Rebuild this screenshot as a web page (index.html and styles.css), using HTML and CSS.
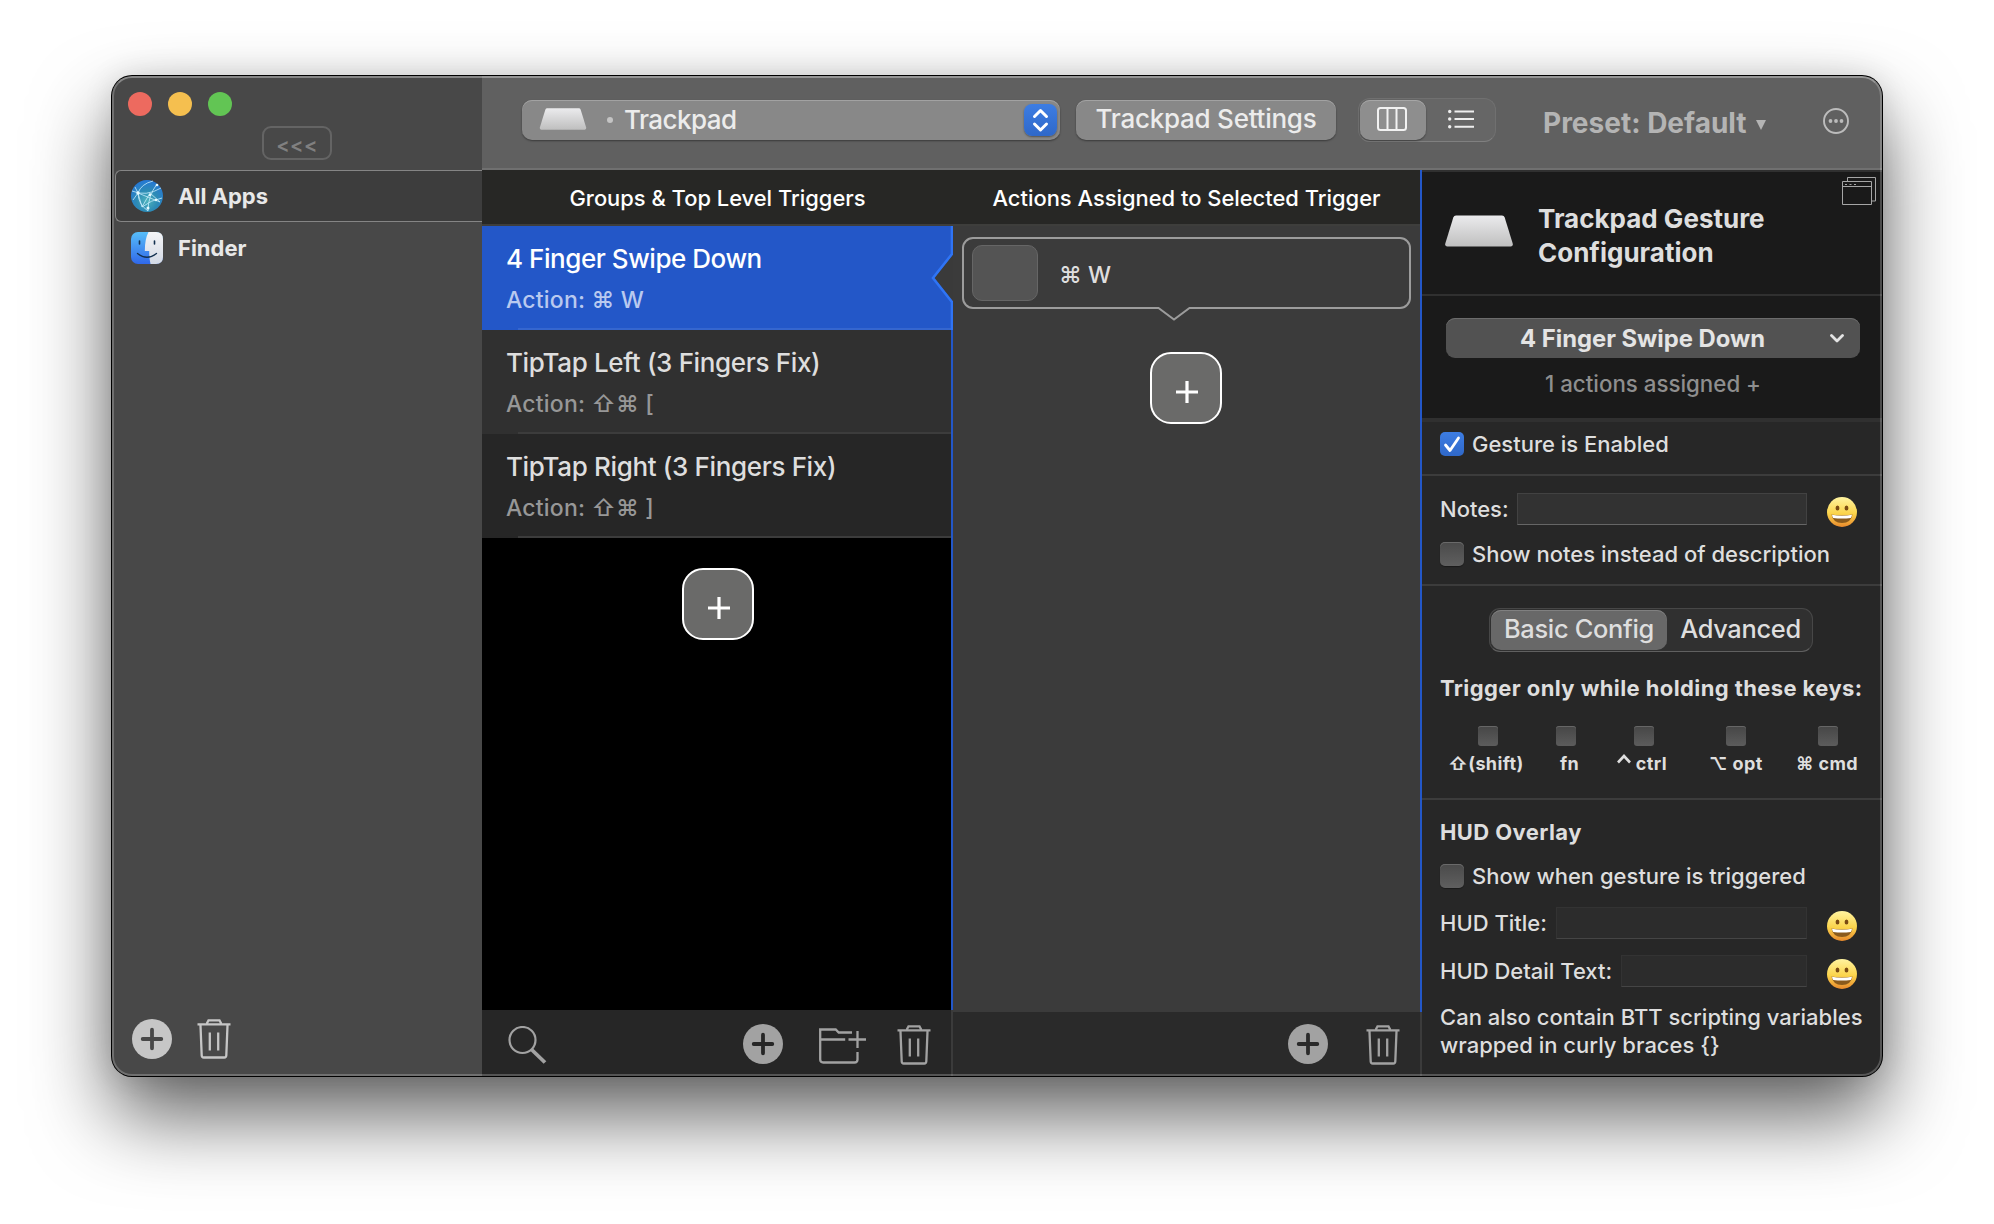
FILE: index.html
```html
<!DOCTYPE html>
<html lang="en">
<head>
<meta charset="utf-8">
<title>Trackpad triggers</title>
<link rel="stylesheet" href="styles.css">
</head>
<body>
<svg class="defs" width="0" height="0" aria-hidden="true">
  <defs>
    <linearGradient id="pad" x1="0" y1="0" x2="0" y2="1"><stop offset="0" stop-color="#ebebed"/><stop offset="1" stop-color="#bfbfbf"/></linearGradient>
    <linearGradient id="face" x1="0" y1="0" x2="0" y2="1"><stop offset="0" stop-color="#fff3a0"/><stop offset=".55" stop-color="#fbd44b"/><stop offset="1" stop-color="#e8892c"/></linearGradient>
    <radialGradient id="globe" cx=".5" cy=".65" r=".65"><stop offset="0" stop-color="#4fb4bd"/><stop offset=".5" stop-color="#2d8bb5"/><stop offset="1" stop-color="#2577d6"/></radialGradient>
    <linearGradient id="finderL" x1="0" y1="0" x2="0" y2="1"><stop offset="0" stop-color="#57bdf8"/><stop offset="1" stop-color="#3068ea"/></linearGradient>
    <linearGradient id="finderR" x1="0" y1="0" x2="0" y2="1"><stop offset="0" stop-color="#f4f4f6"/><stop offset="1" stop-color="#d3dae6"/></linearGradient>
    <symbol id="i-pad" viewBox="0 0 68 32"><path d="M11 .5h46q2 0 2.700 2l8 26q.6 3-2 3H2.300q-2.600 0-2-3l8-26q.7-2 2.700-2z" fill="url(#pad)"/></symbol>
    <symbol id="i-emoji" viewBox="0 0 32 32"><circle cx="16" cy="16" r="15" fill="url(#face)"/><ellipse cx="11.500" cy="12" rx="1.900" ry="2.500" fill="#7a4a12"/><ellipse cx="20.500" cy="12" rx="1.900" ry="2.500" fill="#7a4a12"/><path d="M5.500 18.500q10.500 2 21 0q-1.500 8.500-10.500 8.500t-10.500-8.500z" fill="#8a5a1c"/><path d="M6 18.800q10 2 20 0q-.2 2-1.200 3.200q-8.800 1.200-17.600 0q-1-1.200-1.200-3.200z" fill="#fff"/></symbol>
    <symbol id="i-plus" viewBox="0 0 40 40"><circle cx="20" cy="20" r="20" fill="currentColor"/><path d="M20 10.700v18.600M10.700 20h18.600" stroke="var(--hole)" stroke-width="3.800" stroke-linecap="round"/></symbol>
    <symbol id="i-trash" viewBox="0 0 34 40"><path d="M.5 5.300h33M9.800 4.500L11.500 1.400h11l1.700 3.100M3.500 6.500l1.200 30q.1 2 2 2h20.600q1.900 0 2-2l1.200-30M12.800 13.500v18M21.200 13.500v18" fill="none" stroke="currentColor" stroke-width="2.300"/></symbol>
  </defs>
</svg>
<main class="window">
  <aside class="sidebar">
    <div class="titlebar">
      <div class="lights"><i class="red"></i><i class="yellow"></i><i class="green"></i></div>
      <button class="collapse">&lt;&lt;&lt;</button>
    </div>
    <div class="app selected">
      <svg width="32" height="32" viewBox="0 0 32 32"><circle cx="16" cy="16" r="16" fill="url(#globe)"/><g fill="none" stroke="#cdf1ff" stroke-width=".9" opacity=".85"><path d="M1 11q14 6 29-3M7 13q3-9 15-12M7 13q0 11 10 18M26 4q-9 12-9 27M19 13l-8 14M19 13l10 9M11 27q9-7 20-9M7 13q12 5 22 9M2 20l5-7L4 7M11 27L7 13"/></g><g fill="#e5faff"><circle cx="7" cy="13" r="1.700"/><circle cx="26" cy="5" r="1.300"/><circle cx="19" cy="15" r="1.200"/><circle cx="25" cy="20" r="1.300"/><circle cx="17" cy="28" r="1.500"/></g></svg>
      <span>All Apps</span>
    </div>
    <div class="app">
      <svg width="32" height="32" viewBox="0 0 32 32"><rect width="32" height="32" rx="7" fill="url(#finderL)"/><path d="M17.500 0H25q7 0 7 7v18q0 7-7 7h-5.500q-1.300-5-1.300-13h-4.400q0-12 3.700-19z" fill="url(#finderR)"/><path d="M8.500 9v3M23.500 9v3" stroke="#12304f" stroke-width="1.600" stroke-linecap="round"/><path d="M6.500 21.500q9.500 7.500 19 0" fill="none" stroke="#12304f" stroke-width="1.300" stroke-linecap="round"/></svg>
      <span>Finder</span>
    </div>
    <footer class="side-tools">
      <svg class="plus" width="40" height="40"><use href="#i-plus"/></svg>
      <svg class="trash" width="34" height="40"><use href="#i-trash"/></svg>
    </footer>
  </aside>
  <section class="main">
    <header class="toolbar">
      <div class="picker"><svg width="48" height="22"><use href="#i-pad"/></svg><i class="dot"></i><span class="picked">Trackpad</span>
        <span class="stepper"><svg width="33" height="32" viewBox="0 0 33 32" fill="none" stroke="#fff" stroke-width="3" stroke-linecap="round" stroke-linejoin="round"><path d="M10.500 12.500l6-6 6 6M10.500 20l6 6 6-6"/></svg></span></div>
      <button class="settings">Trackpad Settings</button>
      <div class="views">
        <span class="view on"><svg width="30" height="24" viewBox="0 0 30 24" fill="none" stroke="#f2f2f2" stroke-width="2"><rect x="1" y="1" width="28" height="22" rx="2.500"/><path d="M10.500 1v22M19.500 1v22"/></svg></span>
        <span class="view list"><svg width="26" height="20" viewBox="0 0 26 20"><path d="M6.500 2.500H26M6.500 10H26M6.500 17.700H26" stroke="#eee" stroke-width="2.100"/><g fill="#eee"><circle cx="1.700" cy="2.500" r="1.700"/><circle cx="1.700" cy="10" r="1.700"/><circle cx="1.700" cy="17.700" r="1.700"/></g></svg></span>
      </div>
      <div class="preset"><span>Preset: Default</span><i class="caret"></i></div>
      <svg class="more" width="26" height="26" viewBox="0 0 26 26"><circle cx="13" cy="13" r="12" fill="none" stroke="currentColor" stroke-width="1.900"/><g fill="currentColor"><circle cx="7.500" cy="13" r="1.900"/><circle cx="13" cy="13" r="1.900"/><circle cx="18.500" cy="13" r="1.900"/></g></svg>
    </header>
    <div class="columns">
      <section class="col groups">
        <h2>Groups &amp; Top Level Triggers</h2>
        <div class="row active"><b>4 Finger Swipe Down</b><small>Action: ⌘ W</small>
          <svg class="notch" width="22" height="104" viewBox="0 0 22 104"><path d="M22 28L3 52l19 24z" fill="#3a3a3a"/><path d="M21 0v28L2 52l19 24v28" fill="none" stroke="#2f74f5" stroke-width="2.600"/></svg></div>
        <div class="row odd"><b>TipTap Left (3 Fingers Fix)</b><small>Action: ⇧⌘ [</small></div>
        <div class="row"><b>TipTap Right (3 Fingers Fix)</b><small>Action: ⇧⌘ ]</small></div>
        <div class="canvas"><button class="add"><svg width="22" height="22" viewBox="0 0 22 22"><path d="M11 0v22M0 11h22" stroke="#fff" stroke-width="3.200"/></svg></button></div>
        <footer class="tools">
          <svg class="search" width="39" height="38" viewBox="0 0 39 38" fill="none" stroke="currentColor"><circle cx="14.500" cy="14" r="13" stroke-width="2.200"/><path d="M23.500 23.500L37 36.500" stroke-width="3.800"/></svg>
          <svg class="plus" width="40" height="40"><use href="#i-plus"/></svg>
          <svg class="folder" width="47" height="36" viewBox="0 0 47 36" fill="none" stroke="currentColor" stroke-width="2.300"><path d="M38.500 24v7.500q0 3-3 3H4.200q-3 0-3-3V1.500h15.500l3 3H33M1.200 11.500h25M29.500 11.500h17.500M38.500 3v17"/></svg>
          <svg class="trash" width="34" height="40"><use href="#i-trash"/></svg>
        </footer>
      </section>
      <section class="col actions">
        <h2>Actions Assigned to Selected Trigger</h2>
        <div class="board">
          <div class="card"><i class="thumb"></i><span class="shortcut">⌘ W</span>
            <svg class="tip" width="34" height="15" viewBox="0 0 34 15"><path d="M1 0h32v3L17 14 1 3z" fill="#3b3b3b"/><path d="M0 2h1.500L17 13.500 32.500 2H34" fill="none" stroke="#9c9c9c" stroke-width="2"/></svg></div>
          <button class="add"><svg width="22" height="22" viewBox="0 0 22 22"><path d="M11 0v22M0 11h22" stroke="#fff" stroke-width="3.200"/></svg></button>
        </div>
        <footer class="tools">
          <svg class="plus" width="40" height="40"><use href="#i-plus"/></svg>
          <svg class="trash" width="34" height="40"><use href="#i-trash"/></svg>
        </footer>
      </section>
      <section class="inspector">
        <div class="intro">
          <svg width="68" height="32"><use href="#i-pad"/></svg>
          <h1>Trackpad Gesture<br>Configuration</h1>
          <svg class="windows" width="34" height="28" viewBox="0 0 34 28" fill="none" stroke="#a6a6a6" stroke-width="1"><path d="M.5 4.500h29v23H.5zM.5 9.500h29M5.500 4V.5h28v23.500H30"/><path d="M3 7.500h12" stroke-dasharray="2 2.500"/></svg>
        </div>
        <div class="chooser">
          <div class="popup"><span>4 Finger Swipe Down</span><svg width="14" height="9" viewBox="0 0 14 9"><path d="M1.500 1.500L7 7l5.500-5.500" fill="none" stroke="#e4e4e4" stroke-width="2.800" stroke-linecap="round" stroke-linejoin="round"/></svg></div>
          <p>1 actions assigned +</p>
        </div>
        <div class="enabled"><i class="check on"><svg width="24" height="24" viewBox="0 0 24 24"><path d="M5.500 13l4.500 5.500L18.500 6" fill="none" stroke="#fff" stroke-width="2.800" stroke-linecap="round" stroke-linejoin="round"/></svg></i><span>Gesture is Enabled</span></div>
        <div class="notes">
          <div class="field f1"><label>Notes:</label><i class="input strong"></i><svg width="32" height="32"><use href="#i-emoji"/></svg></div>
          <div class="line"><i class="check"></i><span>Show notes instead of description</span></div>
        </div>
        <div class="config">
          <div class="tabs"><span class="tab on">Basic Config</span><span class="tab">Advanced</span></div>
          <h3>Trigger only while holding these keys:</h3>
          <div class="keys">
            <div class="key k1"><i class="mini"></i><span>⇧(shift)</span></div>
            <div class="key k2"><i class="mini"></i><span>fn</span></div>
            <div class="key k3"><i class="mini"></i><span><svg class="ctl" width="14" height="17" viewBox="0 0 14 17"><path d="M1 9.500L7 3l6 6.500" fill="none" stroke="#dedede" stroke-width="2.600"/></svg> ctrl</span></div>
            <div class="key k4"><i class="mini"></i><span>⌥ opt</span></div>
            <div class="key k5"><i class="mini"></i><span>⌘ cmd</span></div>
          </div>
        </div>
        <div class="hud">
          <h3>HUD Overlay</h3>
          <div class="line"><i class="check"></i><span>Show when gesture is triggered</span></div>
          <div class="field f2"><label>HUD Title:</label><i class="input"></i><svg width="32" height="32"><use href="#i-emoji"/></svg></div>
          <div class="field f3"><label>HUD Detail Text:</label><i class="input"></i><svg width="32" height="32"><use href="#i-emoji"/></svg></div>
          <p>Can also contain BTT scripting variables<br>wrapped in curly braces {}</p>
        </div>
      </section>
    </div>
  </section>
</main>
</body>
</html>
```

FILE: styles.css
```css
* { box-sizing: border-box; }
html { background: #fff; }
body { margin: 0; height: 1224px; padding: 76px 112px 0; font-family: Inter, "Liberation Sans", "DejaVu Sans", sans-serif; font-size: 22px; font-weight: 450; color: #dedede; }
.defs { display: block; height: 0; }
svg { display: block; flex: none; }
button { font: inherit; color: inherit; padding: 0; border: 0; }
h1, h2, h3, p { margin: 0; white-space: nowrap; }
i { display: block; flex: none; font-style: normal; }
span, label, b, small { white-space: nowrap; }

.window { position: relative; display: flex; width: 1770px; height: 1000px; border-radius: 20px; overflow: hidden; background: #262626; box-shadow: 0 0 0 1px #000, 0 0 30px rgba(0,0,0,.12), 0 40px 80px rgba(0,0,0,.62); }
.window::after { content: ""; position: absolute; inset: 0; border: 2px solid rgba(255,255,255,.22); border-top-color: rgba(255,255,255,.34); border-radius: 20px; }

.sidebar { width: 370px; background: #484848; display: flex; flex-direction: column; }
.titlebar { height: 94px; padding: 16px 0 0 16px; }
.lights { display: flex; gap: 16px; }
.lights i { width: 24px; height: 24px; border-radius: 50%; }
.red { background: #ed6a5f; } .yellow { background: #f5bf4f; } .green { background: #62c554; }
.collapse { display: block; margin: 10px 0 0 134px; width: 70px; height: 34px; border: 2px solid #646464; border-radius: 9px; background: none; color: #808080; font-size: 20px; font-weight: 600; line-height: 34px; letter-spacing: .4px; }
.app { height: 52px; padding-left: 19px; display: flex; align-items: center; gap: 15px; font-weight: 700; color: #e8e8e8; }
.app.selected { margin-left: 3px; padding-left: 15px; background: #3d3d3d; border: 1px solid #858585; border-right: 0; border-radius: 6px 0 0 6px; }
.side-tools { margin-top: auto; height: 80px; padding: 23px 0 0 20px; display: flex; gap: 25px; align-items: flex-start; color: #c6c6c6; --hole: #484848; }

.main { flex: 1; display: flex; flex-direction: column; }
.toolbar { height: 94px; background: #606060; border-bottom: 2px solid #707070; padding: 0 33px 0 40px; display: flex; align-items: flex-start; }
.picker { width: 538px; height: 40px; margin-top: 24px; border-radius: 10px; background: #888; box-shadow: inset 0 1px #a2a2a2, 0 1px 2px rgba(0,0,0,.4); display: flex; align-items: center; padding: 0 3px 0 17px; font-size: 26px; color: #ececec; }
.picker > svg { margin-top: -2px; }
.picked { letter-spacing: -.55px; padding-bottom: 2px; }
.dot { width: 6px; height: 6px; border-radius: 50%; background: #c4c4c4; margin: 0 11px 0 20px; }
.stepper { margin-left: auto; width: 33px; height: 32px; border-radius: 8px; background: linear-gradient(#3d7de3, #2f68c9); box-shadow: 0 1px 2px rgba(0,0,0,.4); }
.settings { width: 260px; height: 40px; margin: 24px 0 0 16px; border-radius: 10px; background: #888; box-shadow: inset 0 1px #a2a2a2, 0 1px 2px rgba(0,0,0,.4); font-size: 26px; line-height: 36px; padding-bottom: 2px; letter-spacing: -.25px; color: #ececec; }
.views { width: 138px; height: 44px; margin: 22px 0 0 22px; border: 1px solid #707070; border-bottom-color: #808080; border-radius: 12px; background: #666; padding: 1px; display: flex; }
.view { flex: 1; display: grid; place-items: center; height: 40px; padding-bottom: 2px; }
.view.on { flex: 0 0 66px; padding-right: 2px; border-radius: 10px; background: #8e8e8e; box-shadow: inset 0 1px #a6a6a6, 0 1px 2px rgba(0,0,0,.4); }
.view.list { padding-left: 2px; }
.preset { margin: 29px 0 0 47px; display: flex; align-items: center; gap: 9px; font-size: 28px; line-height: 36px; font-weight: 700; color: #b4b4b4; }
.caret { border: 5px solid transparent; border-top: 10px solid #b4b4b4; border-bottom: 0; margin-top: 4px; }
.more { margin: 32px 0 0 auto; color: #bcbcbc; }

.columns { flex: 1; display: flex; min-height: 0; }
.col { display: flex; flex-direction: column; border-right: 2px solid #2357c8; }
.groups { width: 471px; background: #000; }
.actions { width: 469px; background: #3b3b3b; }
.col h2 { height: 56px; background: #272725; border-bottom: 2px solid #3e3e3c; text-align: center; font-size: 21.900px; font-weight: 500; line-height: 56px; color: #fff; }
.groups h2 { margin-right: -2px; position: relative; }
.row { position: relative; height: 104px; padding: 17px 0 0 24px; background: #262626; }
.row::after { content: ""; position: absolute; left: 36px; right: 0; bottom: 0; height: 2px; background: #3c3c3c; }
.row.odd { background: #303030; }
.row.active { background: #2357c8; margin-right: -2px; }
.row.active::after { background: #3566cf; }
.row b { display: block; font-weight: 450; font-size: 26px; letter-spacing: -.35px; line-height: 32px; color: #dedede; }
.row.active b { color: #fff; letter-spacing: -.45px; }
.row small { display: block; margin-top: 9px; font-size: 23px; letter-spacing: .2px; line-height: 32px; color: #979797; }
.row.active small { color: #b9c9ef; }
.notch { position: absolute; right: 0; top: 0; z-index: 1; }
.canvas { flex: 1; padding-top: 30px; padding-left: 200px; }
.add { display: block; width: 72px; height: 72px; border: 2px solid #fff; border-radius: 21px; background: #6a6a69; padding: 8px 0 0 24px; }
.tools { height: 66px; margin-right: -2px; border-right: 2px solid #3b3b3b; background: #262626; display: flex; align-items: flex-start; color: #a2a2a2; --hole: #262626; position: relative; }
.groups .tools { padding-left: 26px; }
.groups .search { margin-top: 16px; } .groups .plus { margin: 14px 0 0 196px; } .groups .folder { margin: 18px 0 0 36px; } .groups .trash { margin: 15px 0 0 31px; }
.actions .tools { height: 64px; padding: 12px 0 0 335px; gap: 38px; background: #2a2a2a; --hole: #2a2a2a; }
.actions .trash { margin-top: 1px; }
.board { flex: 1; padding: 11px 9px; }
.card { position: relative; height: 72px; border: 2px solid #9c9c9c; border-radius: 11px; display: flex; align-items: center; padding-left: 8px; gap: 21px; font-weight: 500; font-size: 23px; }
.shortcut { padding-top: 3px; }
.thumb { width: 66px; height: 56px; border: 1px solid #666; border-radius: 10px; background: #545454; }
.tip { position: absolute; left: 193px; top: 67px; }
.board .add { margin: 43px 0 0 188px; }

.inspector { flex: 1; background: #272727; border-top: 2px solid #303030; font-size: 22px; }
.intro { position: relative; height: 124px; background: #1a1a1a; border-bottom: 2px solid #303030; display: flex; align-items: center; padding: 0 0 0 23px; gap: 25px; }
.intro > svg:first-child { margin-top: -4px; }
.intro h1 { font-size: 26px; line-height: 34px; font-weight: 700; padding-top: 5px; }
.windows { position: absolute; right: 6px; top: 5px; }
.chooser { height: 126px; background: #1a1a1a; border-bottom: 4px solid #303030; padding: 22px 22px 0 24px; }
.popup { height: 40px; border-radius: 9px; background: #525252; box-shadow: inset 0 1px #6c6c6c; display: flex; align-items: center; justify-content: space-between; padding: 0 16px 0 74px; font-size: 23.800px; font-weight: 700; color: #e4e4e4; }
.chooser p { text-align: center; line-height: 52px; color: #8e8e8e; font-size: 22.300px; }
.check { width: 24px; height: 24px; border-radius: 5px; background: linear-gradient(#4a4a4a, #5f5f5f); box-shadow: inset 0 1px #6a6a6a, 0 1px 1px rgba(0,0,0,.35); }
.check.on { background: linear-gradient(#3d7de3, #2f68c9); box-shadow: none; }
.enabled { height: 54px; padding: 10px 0 0 18px; border-bottom: 2px solid #3c3c3c; display: flex; gap: 8px; line-height: 24px; }
.notes { height: 110px; padding: 17px 0 0 18px; border-bottom: 2px solid #3c3c3c; }
.line { display: flex; gap: 8px; line-height: 24px; }
.field { display: flex; height: 32px; line-height: 32px; }
.field svg { margin: 3px 0 0 19px; }
.field label { flex: none; }
.input { height: 32px; background: #2c2c2c; border: 1px solid #333; border-bottom: 1px solid #454545; }
.input.strong { background: #323232; border-color: #424242; border-bottom-color: #666; }
.f1 label { width: 77px; } .f1 .input { width: 290px; }
.f2 label { width: 116px; } .f2 .input { width: 251px; }
.f3 label { width: 181px; } .f3 .input { width: 186px; }
.notes .line { margin-top: 17px; }
.config { height: 214px; border-bottom: 2px solid #3c3c3c; padding-top: 22px; }
.tabs { margin-left: 67px; width: 324px; height: 44px; border: 1px solid #474747; border-bottom-color: #606060; border-radius: 11px; background: #303030; padding: 1px; display: flex; font-size: 25.400px; letter-spacing: -.3px; line-height: 38px; text-align: center; }
.tab { flex: 1; padding-left: 3px; }
.tab.on { flex: 0 0 176px; height: 40px; padding: 0; border-radius: 10px; background: #686868; box-shadow: inset 0 1px #808080; }
h3 { font-size: 22px; font-weight: 700; line-height: 28px; letter-spacing: .4px; }
.config h3 { padding: 22px 0 0 18px; }
.keys { display: flex; margin: 24px 0 0 26px; font-size: 18px; font-weight: 700; letter-spacing: .4px; line-height: 24px; }
.mini { width: 20px; height: 20px; border-radius: 3px; background: linear-gradient(#464646, #5c5c5c); box-shadow: inset 0 1px #666; margin-bottom: 6px; }
.k1 { width: 112px; } .k2 { width: 57px; } .k3 { width: 92px; } .k4 { width: 87px; }
.k1 .mini { margin-left: 30px; } .k2 .mini { margin-left: -4px; } .k3 .mini { margin-left: 17px; } .k4 .mini { margin-left: 17px; } .k5 .mini { margin-left: 22px; }
.ctl { display: inline-block; vertical-align: baseline; }
.hud { padding: 18px 0 0 18px; }
.hud .line { margin-top: 18px; }
.f2 { margin-top: 19px; } .f3 { margin-top: 16px; }
.hud p { margin-top: 16px; line-height: 28px; }
```
